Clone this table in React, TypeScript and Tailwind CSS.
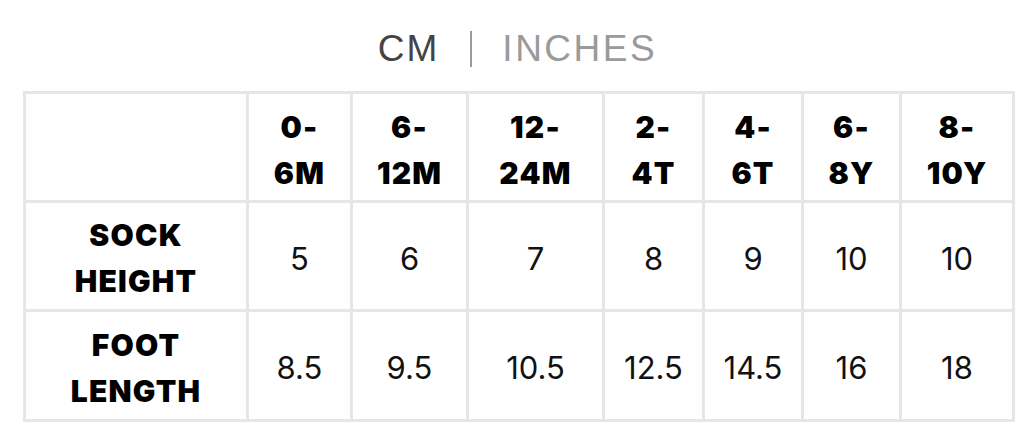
import React from "react";

const cols = ["0-\n6M", "6-\n12M", "12-\n24M", "2-\n4T", "4-\n6T", "6-\n8Y", "8-\n10Y"];
const rows: [string, string[]][] = [
  ["SOCK\nHEIGHT", ["5", "6", "7", "8", "9", "10", "10"]],
  ["FOOT\nLENGTH", ["8.5", "9.5", "10.5", "12.5", "14.5", "16", "18"]],
];

const headFont = { fontFamily: "Inter, 'Noto Sans', sans-serif" };

function Bold({ text }: { text: string }) {
  const parts = text.split("\n");
  return (
    <div className="text-center text-[30px] font-black leading-[46px] text-black tracking-[1.2px]" style={headFont}>
      {parts.map((p, i) => (
        <div key={i}>{p}</div>
      ))}
    </div>
  );
}

export default function App() {
  return (
    <div className="w-[1024px] h-[427px] bg-white overflow-hidden">
      <div className="h-[91px] flex items-center justify-center pt-[6px] pl-[11px]" style={{ fontFamily: "'Liberation Sans', Arial, sans-serif" }}>
        <span className="text-[37px] text-[#444] tracking-[2px] leading-none">CM</span>
        <span className="ml-[31px] mr-[30px] w-[2px] h-[36px] bg-[#9a9a9a]" />
        <span className="text-[37px] text-[#9a9a9a] tracking-[2.5px] leading-none">INCHES</span>
      </div>
      <div className="ml-[23px] w-[992px] bg-[#e6e6e6] p-[3px] grid gap-[3px] grid-cols-[220px_101px_113px_133px_97px_96px_95px_110px] grid-rows-[106px_106px_107px]">
        <div className="bg-white" />
        {cols.map((c) => (
          <div key={c} className="bg-white flex items-center justify-center pt-[6px]">
            <Bold text={c} />
          </div>
        ))}
        {rows.map(([label, vals]) => (
          <React.Fragment key={label}>
            <div className="bg-white flex items-center justify-center pt-[4px]">
              <Bold text={label} />
            </div>
            {vals.map((v, i) => (
              <div
                key={i}
                className="bg-white flex items-center justify-center text-[31px] text-[#111] pt-[6px]"
                style={{ fontFamily: "Inter, 'Noto Sans', sans-serif" }}
              >
                {v}
              </div>
            ))}
          </React.Fragment>
        ))}
      </div>
    </div>
  );
}
